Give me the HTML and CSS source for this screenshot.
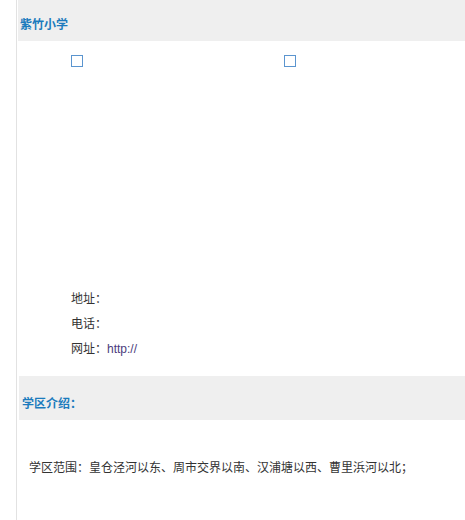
FILE: index.html
```html
<!DOCTYPE html>
<html lang="zh-CN">
<head>
    <meta charset="UTF-8">
    <title>紫竹小学</title>
    <link rel="stylesheet" href="styles.css">
</head>
<body>
    <div class="page">
        <h2 class="bar">紫竹小学</h2>

        <!-- photos (broken images in the original) -->
        <div class="photos">
            <span class="pic"></span>
            <span class="pic"></span>
        </div>

        <ul class="info">
            <li>地址：</li>
            <li>电话：</li>
            <li>网址：<a href="#" class="link">http://</a></li>
        </ul>

        <h2 class="bar bar-second">学区介绍：</h2>

        <p class="range">学区范围：皇仓泾河以东、周市交界以南、汉浦塘以西、曹里浜河以北；</p>
    </div>
</body>
</html>
```

FILE: styles.css
```css
* {
    margin: 0;
    padding: 0;
    box-sizing: border-box;
}

body {
    background: #fff;
    color: #333;
    font-family: "Noto Sans CJK SC", "Liberation Sans", sans-serif;
    font-size: 12px;
}

.page {
    margin-left: 16px;
    border-left: 1px solid #e2e2e2;
    min-height: 520px;
}

/* gray title bands */
.bar {
    background: #efefef;
    color: #1b7bbd;
    font-size: 12px;
    font-weight: 700;
    height: 41px;
    margin-left: 1px;
    padding: 5px 0 0 2px;
    display: flex;
    align-items: center;
}

.bar-second {
    height: 44px;
    margin-top: 14px;
    margin-left: 2px;
    padding: 8px 0 0 3px;
}

.photos {
    height: 244px;
    padding: 14px 0 0 54px;
    display: flex;
    gap: 201px;
    align-items: flex-start;
}

.pic {
    width: 12px;
    height: 12px;
    border: 1px solid #5b95cf;
}

.info {
    list-style: none;
    padding-left: 54px;
}

.info li {
    line-height: 25px;
}

.link {
    color: #4b3b7c;
    text-decoration: none;
    font-family: "Liberation Sans", sans-serif;
}

.range {
    padding: 39px 0 0 12px;
    line-height: 16px;
}
```
